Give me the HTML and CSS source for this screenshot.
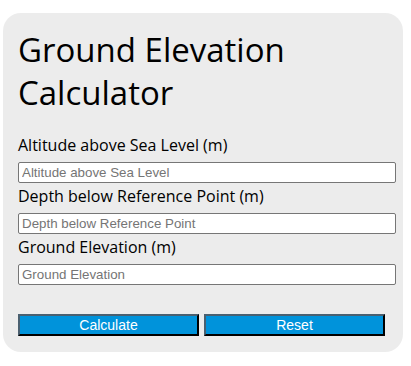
FILE: index.html
```html
<!DOCTYPE html>
<html lang="en">
<head>
    <meta charset="UTF-8">
    <meta name="viewport" content="width=device-width, initial-scale=1.0">
    <title>Ground Elevation Calculator</title>
    <link rel="stylesheet" href="styles.css">
</head>
<body>

<div class="calc-card">
    <h1>Ground Elevation Calculator</h1>
    <div class="field">
        <label for="altitude">Altitude above Sea Level (m)</label>
        <input type="text" id="altitude" placeholder="Altitude above Sea Level">
    </div>
    <div class="field">
        <label for="depth">Depth below Reference Point (m)</label>
        <input type="text" id="depth" placeholder="Depth below Reference Point">
    </div>
    <div class="field">
        <label for="elevation">Ground Elevation (m)</label>
        <input type="text" id="elevation" placeholder="Ground Elevation">
    </div>
    <div class="controls">
        <button type="button">Calculate</button>
        <button type="button">Reset</button>
    </div>
</div>

</body>
</html>
```

FILE: styles.css
```css
/* Basic styling */
body {
    margin: 0;
    background: #fff;
    font-family: 'Open Sans', sans-serif;
    color: #000;
}

/* Calculator card */
.calc-card {
    box-sizing: border-box;
    width: 400px;
    margin: 13px 0 0 3px;
    padding: 15px 15px 16px 15px;
    background-color: #ececec;
    border-radius: 18px;
}

h1 {
    margin: 0 0 21px 0;
    font-size: 33px;
    font-weight: normal;
    line-height: 43px;
}

.field label {
    display: block;
    font-size: 16px;
    line-height: 21px;
    margin-bottom: 6px;
}

.field input {
    box-sizing: border-box;
    display: block;
    width: 378px;
    height: 21px;
    margin: 0 0 3px 0;
    padding: 0 3px;
    border: 1px solid #767676;
    border-radius: 2px;
    background: #fff;
    font-family: 'Liberation Sans', Arial, sans-serif;
    font-size: 13.33px;
}

.field input::placeholder {
    color: #757575;
}

.controls {
    display: flex;
    gap: 5px;
    margin-top: 29px;
}

button {
    box-sizing: border-box;
    width: 181px;
    height: 22px;
    padding: 0;
    border: 2px outset #1a1a1a;
    border-top-color: #4a6070;
    border-left-color: #4a6070;
    background-color: #0093db;
    color: #fff;
    font-family: 'Liberation Sans', Arial, sans-serif;
    font-size: 14px;
    cursor: pointer;
}
```
